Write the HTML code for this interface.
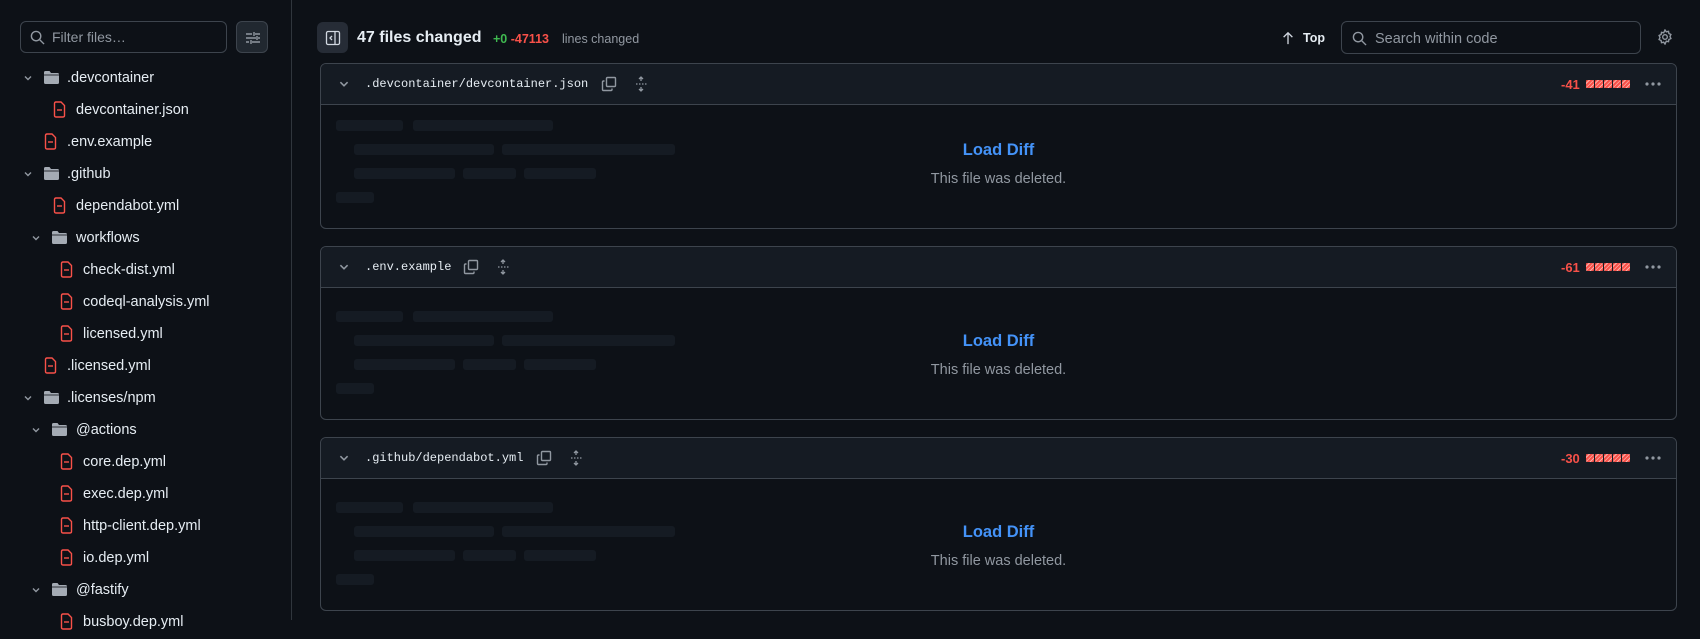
<!DOCTYPE html>
<html><head><meta charset="utf-8"><style>
*{box-sizing:border-box;margin:0;padding:0}
body{width:1700px;height:620px;overflow:hidden;background:#0d1117;font-family:"Liberation Sans",sans-serif;color:#e6edf3;position:relative}
.abs{position:absolute}
.side{left:0;top:0;width:292px;height:620px;border-right:1px solid #30363d}
.filter{left:20px;top:21px;width:207px;height:32px;border:1px solid #3d444d;border-radius:6px;background:#0d1117}
.filter span{position:absolute;left:31px;top:7px;font-size:14px;color:#9198a1}
.btn{background:#212830;border:1px solid #3d444d;border-radius:6px}
.row{position:absolute;height:32px;line-height:34px;font-size:14.5px;color:#e6edf3;white-space:nowrap}
.box{left:320px;width:1357px;border:1px solid #3d444d;border-radius:6px;overflow:hidden}
.hd{height:41px;background:#151b23;border-bottom:1px solid #3d444d;position:relative}
.fn{position:absolute;left:44px;top:13px;font-family:"Liberation Mono",monospace;font-size:12px;color:#e6edf3}
.sk{position:absolute;height:11px;background:#151b23;border-radius:3px}
.del{color:#f85149;font-size:13px;position:absolute;top:13px;font-weight:bold}
.bars{position:absolute;top:16px;display:flex;gap:1px}
.bars i{display:block;width:8px;height:8px;border-radius:1px;background:repeating-linear-gradient(135deg,#f85149 0 2px,#f8b0aa 2px 3px)}
</style></head><body>
<div class="abs side"></div>
<div class="abs filter">
<svg class="abs" style="left:9px;top:8px" width="15" height="15" viewBox="0 0 16 16"><circle cx="6.5" cy="6.5" r="5" fill="none" stroke="#9198a1" stroke-width="1.5"/><path d="M10.5 10.5L15 15" stroke="#9198a1" stroke-width="1.5"/></svg>
<span>Filter files…</span></div>
<div class="abs btn" style="left:236px;top:21px;width:32px;height:32px">
<svg class="abs" style="left:8px;top:8px" width="16" height="16" viewBox="0 0 16 16" stroke="#9198a1" stroke-width="1.4" fill="none"><path d="M1 4h6M10 4h5M9 2v4M1 12h3M7 12h8M6 10v4M1 8h10M13 8h2M12 6v4"/></svg></div>

<div id="tree"></div>

<div class="abs btn" style="left:317px;top:22px;width:31px;height:31px;background:#262c36;border:none">
<svg class="abs" style="left:8px;top:8px" width="16" height="16" viewBox="0 0 16 16" fill="none" stroke="#d1d7e0" stroke-width="1.3"><rect x="1.5" y="1.5" width="13" height="13" rx="1.5"/><path d="M10 2v12"/><path d="M7 6l-2 2 2 2" /></svg></div>
<div class="abs" style="left:357px;top:29px;font-size:16px;font-weight:bold">47 files changed</div>
<div class="abs" style="left:493px;top:32px;font-size:12.5px;font-weight:bold;color:#3fb950">+0 <span style="color:#f85149">-47113</span></div>
<div class="abs" style="left:562px;top:32px;font-size:12.5px;color:#9198a1">lines changed</div>

<svg class="abs" style="left:1281px;top:31px" width="14" height="14" viewBox="0 0 16 16" fill="none" stroke="#d1d7e0" stroke-width="1.5"><path d="M8 15V2M3 7l5-5 5 5"/></svg>
<div class="abs" style="left:1303px;top:31px;font-size:12.5px;font-weight:bold">Top</div>
<div class="abs filter" style="left:1341px;top:21px;width:300px;height:33px">
<svg class="abs" style="left:10px;top:9px" width="15" height="15" viewBox="0 0 16 16"><circle cx="6.5" cy="6.5" r="5" fill="none" stroke="#9198a1" stroke-width="1.5"/><path d="M10.5 10.5L15 15" stroke="#9198a1" stroke-width="1.5"/></svg>
<span style="left:33px;top:9px;font-size:14.5px">Search within code</span></div>
<svg class="abs" style="left:1657px;top:29px" width="16" height="16" viewBox="0 0 16 16" fill="none" stroke="#9198a1" stroke-width="1.4"><circle cx="8" cy="8" r="2.3"/><path d="M8 1l1.3 1.8 2.2-.5.4 2.2 2 1-.9 2 .9 2-2 1-.4 2.2-2.2-.5L8 15l-1.3-1.8-2.2.5-.4-2.2-2-1 .9-2-.9-2 2-1 .4-2.2 2.2.5z"/></svg>

<div id="boxes"></div>
<script>
const tree=[
[0,'d','.devcontainer'],[1,'f','devcontainer.json'],[0,'f','.env.example'],[0,'d','.github'],[1,'f','dependabot.yml'],[1,'d','workflows'],[2,'f','check-dist.yml'],[2,'f','codeql-analysis.yml'],[2,'f','licensed.yml'],[0,'f','.licensed.yml'],[0,'d','.licenses/npm'],[1,'d','@actions'],[2,'f','core.dep.yml'],[2,'f','exec.dep.yml'],[2,'f','http-client.dep.yml'],[2,'f','io.dep.yml'],[1,'d','@fastify'],[2,'f','busboy.dep.yml']];
let h='';
tree.forEach((t,i)=>{const y=61+i*32;const [lv,k,n]=t;
if(k=='d'){const cx=lv==0?23:31, fx=lv==0?43:51, tx=lv==0?67:76;
h+=`<svg class="abs" style="left:${cx}px;top:${y+12}px" width="10" height="10" viewBox="0 0 10 10"><path d="M2 3.5l3 3 3-3" stroke="#9198a1" stroke-width="1.4" fill="none"/></svg>`;
h+=`<svg class="abs" style="left:${fx}px;top:${y+9}px" width="17" height="15" viewBox="0 0 17 15"><path d="M1 2.5Q1 1 2.5 1h4l1.5 2h6.5Q16 3 16 4.5v8Q16 14 14.5 14h-12Q1 14 1 12.5z" fill="#a4abb4"/><path d="M1 5h15" stroke="#0d1117" stroke-width="0.8"/></svg>`;
h+=`<div class="row" style="left:${tx}px;top:${y}px">${n}</div>`;}
else{const tx=[67,76,83][lv];
h+=`<svg class="abs" style="left:${[44,53,60][lv]}px;top:${y+8}px" width="13" height="17" viewBox="0 0 13 17" fill="none" stroke="#f85149" stroke-width="1.4"><path d="M1.5 2.5Q1.5 1 3 1h5l3.5 3.5v10Q11.5 16 10 16H3Q1.5 16 1.5 14.5z"/><path d="M4 9h5"/></svg>`;
h+=`<div class="row" style="left:${tx}px;top:${y}px">${n}</div>`;}
});
document.getElementById('tree').innerHTML=h;
const boxes=[[63,166,'.devcontainer/devcontainer.json','-41',600],[246,174,'.env.example','-61',462],[437,174,'.github/dependabot.yml','-30',535]];
let b='';
boxes.forEach(([top,hh,n,d,ix])=>{
const by=top+41;
b+=`<div class="abs box" style="top:${top}px;height:${hh}px"><div class="hd">
<svg class="abs" style="left:17px;top:14px" width="12" height="12" viewBox="0 0 10 10"><path d="M2 3.5l3 3 3-3" stroke="#9198a1" stroke-width="1.3" fill="none"/></svg>
<div class="fn">${n}</div>
<svg class="abs" style="left:${ix-320}px;top:12px" width="16" height="16" viewBox="0 0 16 16" fill="none" stroke="#9198a1" stroke-width="1.4"><rect x="5.5" y="1.5" width="9" height="9" rx="1"/><path d="M3.5 5H2.5Q1.5 5 1.5 6v7.5Q1.5 14.5 2.5 14.5H10Q11 14.5 11 13.5v-1"/></svg>
<svg class="abs" style="left:${ix-320+32}px;top:12px" width="16" height="16" viewBox="0 0 16 16" fill="none" stroke="#9198a1" stroke-width="1.3"><path d="M8 1v4M6 3l2-2 2 2M8 15v-4M6 13l2 2 2-2M3 8h1.5M6 8h1.5M9 8h1.5M12 8h1.5"/></svg>
<div class="del" style="left:1240px">${d}</div>
<div class="bars" style="left:1265px"><i></i><i></i><i></i><i></i><i></i></div>
<svg class="abs" style="left:1324px;top:18px" width="16" height="4" viewBox="0 0 16 4" fill="#9198a1"><circle cx="2" cy="2" r="1.6"/><circle cx="8" cy="2" r="1.6"/><circle cx="14" cy="2" r="1.6"/></svg>
</div></div>`;
const o=by+(hh>170?8:0);
[[336,120,67],[413,120,140],[354,144,140],[502,144,173],[354,168,101],[463,168,53],[524,168,72],[336,192,38]].forEach(([x,y,w])=>{b+=`<div class="sk" style="left:${x}px;top:${o+y-104}px;width:${w}px"></div>`});
b+=`<div class="abs" style="left:320px;width:1357px;text-align:center;top:${o+37}px;font-size:16.5px;font-weight:bold;color:#4493f8">Load Diff</div>`;
b+=`<div class="abs" style="left:320px;width:1357px;text-align:center;top:${o+67}px;font-size:14.5px;color:#9198a1">This file was deleted.</div>`;
});
document.getElementById('boxes').innerHTML=b;
</script>
</body></html>
